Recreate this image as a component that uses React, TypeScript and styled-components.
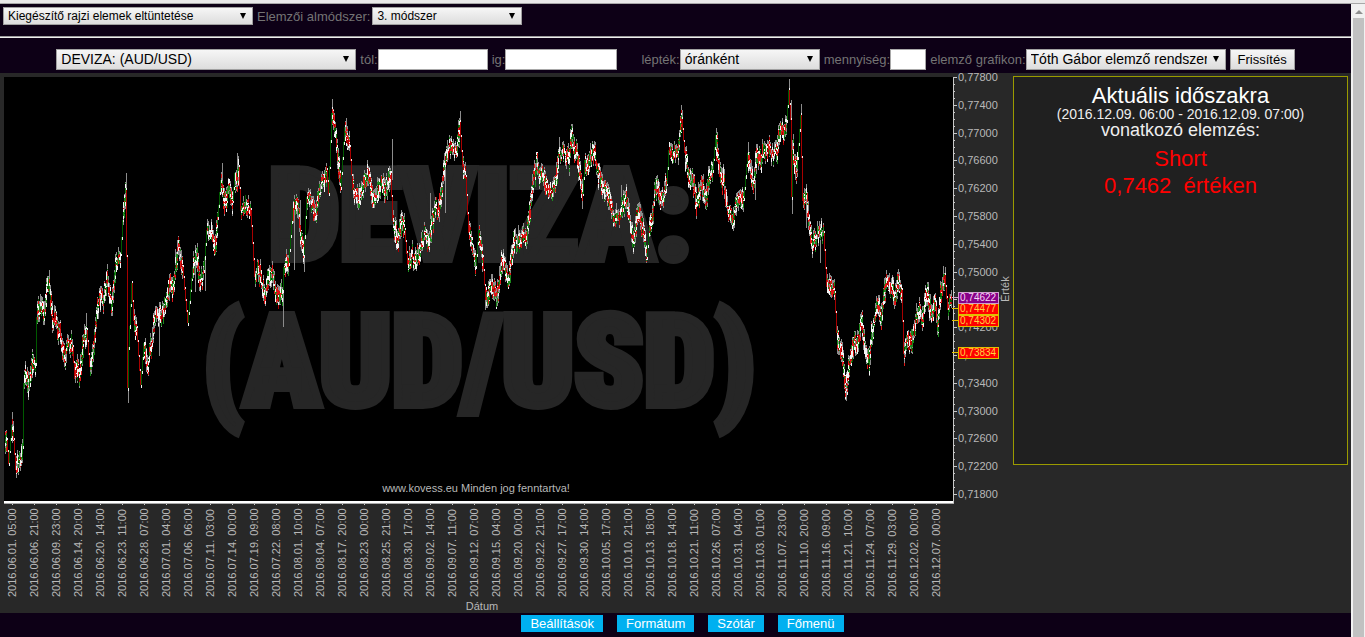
import React from "react";
import styled, { createGlobalStyle } from "styled-components";

const GlobalStyle = createGlobalStyle`
  * { box-sizing: border-box; }
  body {
    margin: 0;
    background: #0d0016;
    font-family: "Liberation Sans", Arial, sans-serif;
    font-size: 13px;
    color: #747474;
  }
`;

const Page = styled.div`
  display: flex;
  flex-direction: column;
  min-height: 100vh;
`;

const WindowEdge = styled.div`
  height: 4px;
  background: #e9e9e9;
  border-bottom: 1px solid #a8a8a8;
`;

const Body = styled.div`
  display: flex;
  flex: 1;
`;

const Content = styled.div`
  display: flex;
  flex-direction: column;
  flex: 1;
  min-width: 0;
`;

const ScrollTrack = styled.div`
  display: flex;
  flex-direction: column;
  align-items: center;
  width: 14px;
  padding: 6px 1px 0 2px;
  background: #f1f1f1;
`;

const ScrollThumb = styled.div`
  flex: 1;
  width: 100%;
  margin-top: 4px;
  background: #c1c1c1;
`;

const MethodBar = styled.form`
  display: flex;
  align-items: center;
  gap: 4px;
  height: 32px;
  padding: 0 3px 8px;
`;

const Divider = styled.hr`
  width: 100%;
  height: 2px;
  margin: 0;
  border: 0;
  border-top: 1px solid #9a9a9a;
  background: #eeeeee;
`;

const FilterBar = styled.form`
  display: flex;
  align-items: center;
  justify-content: center;
  gap: 4px;
  height: 35px;
  padding-top: 7px;
`;

const Field = styled.label`
  display: flex;
  align-items: center;
  white-space: nowrap;
`;

const MethodField = styled(Field)`
  gap: 2px;
`;

const WideField = styled(Field)`
  margin-left: 20px;
`;

const SelectBox = styled.span<{ $width: number }>`
  position: relative;
  display: block;
  width: ${(p) => p.$width}px;

  &::after {
    content: "";
    position: absolute;
    top: 50%;
    right: 7px;
    margin-top: -3px;
    border: 3px solid transparent;
    border-top: 6px solid #000;
    border-bottom: 0;
    pointer-events: none;
  }
`;

const Select = styled.select<{ $compact?: boolean }>`
  appearance: none;
  display: block;
  width: 100%;
  height: ${(p) => (p.$compact ? 18 : 21)}px;
  padding: 0 18px 0 4px;
  border: 1px solid #a0a0a0;
  border-radius: 0;
  background: linear-gradient(#f6f6f6, #dddddd);
  color: #000;
  font: ${(p) => (p.$compact ? 12 : 14)}px "Liberation Sans", Arial, sans-serif;
`;

const TextInput = styled.input<{ $width: number }>`
  width: ${(p) => p.$width}px;
  height: 21px;
  padding: 0 2px;
  border: 1px solid #a8a8a8;
  border-radius: 0;
  background: #fff;
  font: 13px "Liberation Sans", Arial, sans-serif;
`;

const RefreshButton = styled.button`
  height: 21px;
  padding: 0 7px;
  border: 1px solid #a0a0a0;
  border-radius: 0;
  background: linear-gradient(#f6f6f6, #dddddd);
  color: #000;
  font: 13px "Liberation Sans", Arial, sans-serif;
`;

const Workspace = styled.main`
  display: grid;
  grid-template-columns: minmax(0, 1013fr) minmax(0, 335fr);
  align-items: start;
  padding-right: 3px;
  background: #282828;
`;

const ChartFigure = styled.figure`
  margin: 0;

  svg {
    display: block;
    width: 100%;
    height: auto;
    overflow: visible;
  }
`;

const Panel = styled.section`
  display: flex;
  flex-direction: column;
  align-items: center;
  min-height: 389px;
  margin-top: 3px;
  padding-top: 7px;
  border: 1px solid #9a9a00;
  background: #202020;
  color: #fff;
  white-space: nowrap;
`;

const PanelTitle = styled.h1`
  margin: 0;
  font-size: 22px;
  font-weight: 400;
  line-height: 23px;
`;

const PanelPeriod = styled.p`
  margin: 0;
  font-size: 14px;
  line-height: 15px;
  color: #eee;
`;

const PanelSubtitle = styled.p`
  margin: 0 0 7px;
  font-size: 18px;
  line-height: 16px;
  color: #eee;
`;

const Signal = styled.strong`
  color: #f00;
  font-size: 22px;
  font-weight: 400;
  line-height: 27px;
  white-space: pre;
`;

const Footer = styled.nav`
  display: flex;
  justify-content: center;
  gap: 14px;
  padding: 2px 0 5px 14px;
`;

const FooterButton = styled.button`
  height: 17px;
  padding: 0 9px;
  border: 0;
  background: #00b0f0;
  color: #fff;
  font: 13px/17px "Liberation Sans", Arial, sans-serif;
`;

/* Course of the exchange rate, as x, y pairs in chart units. */
const COURSE = [
  5, 450, 7, 440, 9, 463, 12, 425, 14, 440, 16, 470, 20, 460, 23, 446, 24, 383, 26, 370, 29, 390, 33, 363, 36, 363,
  37, 317, 42, 303, 44, 312, 47, 290, 49, 282, 53, 317, 57, 323, 61, 337, 65, 360, 68, 342, 73, 347, 75, 378,
  77, 363, 80, 376, 83, 343, 87, 330, 90, 367, 94, 343, 97, 313, 100, 297, 103, 303, 107, 280, 112, 305, 116, 267,
  121, 253, 123, 220, 126, 190, 127, 257, 128, 388, 129, 347, 132, 283, 134, 320, 137, 328, 141, 385, 144, 343,
  148, 367, 152, 340, 156, 310, 160, 317, 165, 307, 170, 280, 173, 290, 178, 247, 183, 267, 188, 323, 193, 267,
  197, 257, 200, 285, 204, 270, 207, 230, 211, 230, 215, 248, 218, 217, 221, 180, 226, 203, 229, 183, 233, 200,
  235, 173, 237, 187, 239, 167, 241, 210, 247, 207, 251, 210, 255, 277, 258, 267, 265, 295, 271, 270, 275, 287,
  279, 300, 283, 290, 284, 267, 289, 263, 293, 207, 297, 200, 300, 227, 304, 255, 307, 197, 312, 203, 316, 215,
  319, 193, 324, 180, 327, 170, 329, 193, 332, 113, 336, 137, 341, 187, 345, 127, 350, 147, 353, 190, 359, 203,
  363, 183, 368, 173, 374, 200, 381, 183, 385, 193, 391, 173, 393, 220, 397, 243, 402, 220, 405, 230, 408, 265,
  412, 253, 415, 265, 421, 247, 425, 235, 429, 240, 432, 223, 436, 205, 439, 213, 443, 177, 447, 147, 452, 150,
  457, 152, 460, 122, 463, 167, 466, 177, 469, 233, 473, 250, 476, 266, 479, 230, 483, 257, 486, 300, 491, 283,
  497, 300, 502, 260, 505, 267, 509, 283, 512, 253, 515, 237, 518, 243, 523, 233, 527, 237, 530, 213, 533, 180,
  537, 163, 540, 177, 544, 177, 547, 187, 552, 193, 557, 173, 559, 153, 565, 153, 569, 160, 572, 137, 577, 153,
  583, 193, 585, 160, 588, 167, 593, 147, 598, 167, 603, 193, 607, 190, 613, 217, 620, 213, 626, 197, 630, 220,
  634, 243, 638, 213, 640, 217, 643, 227, 647, 257, 649, 233, 653, 210, 657, 180, 662, 203, 667, 183, 669, 150,
  673, 153, 678, 150, 682, 119, 685, 153, 690, 183, 693, 177, 697, 203, 702, 183, 706, 203, 709, 177, 713, 170,
  716, 135, 719, 167, 724, 183, 728, 210, 733, 218, 739, 197, 743, 198, 744, 198, 748, 153, 751, 167, 754, 183,
  757, 155, 761, 160, 767, 147, 772, 153, 777, 150, 781, 123, 784, 133, 787, 120, 789, 90, 791, 120, 792, 197,
  793, 150, 796, 177, 798, 157, 801, 115, 803, 200, 807, 197, 812, 245, 818, 233, 824, 233, 827, 287, 830, 283,
  835, 293, 837, 333, 842, 353, 846, 390, 849, 367, 855, 340, 858, 347, 862, 320, 865, 350, 869, 360, 872, 333,
  878, 305, 881, 320, 886, 283, 892, 287, 895, 303, 898, 283, 902, 290, 904, 353, 908, 337, 911, 347, 914, 327,
  919, 307, 923, 320, 927, 287, 931, 313, 935, 303, 938, 323, 942, 287, 945, 275, 948, 310, 952, 302,
];

/* Long shadows: x, top, bottom. */
const SHADOWS = [
  [12, 412, 425], [16, 460, 478], [49, 270, 284], [86, 313, 340], [107, 264, 284], [126, 173, 200], [128, 380, 403],
  [159, 320, 356], [195, 245, 292], [205, 255, 291], [222, 163, 180], [237, 153, 170], [283, 284, 327],
  [294, 195, 270], [300, 200, 225], [304, 245, 272], [332, 99, 120], [346, 118, 130], [392, 139, 180],
  [430, 193, 240], [445, 155, 213], [460, 111, 130], [485, 290, 310], [559, 137, 150], [572, 126, 145],
  [582, 190, 209], [621, 185, 205], [682, 110, 125], [716, 128, 140], [733, 215, 231], [748, 142, 160],
  [755, 180, 200], [789, 79, 95], [791, 100, 118], [792, 140, 214], [801, 104, 120], [806, 195, 228],
  [820, 232, 263], [846, 385, 401], [878, 295, 310], [904, 345, 359], [945, 267, 280], [948, 305, 320],
];

type Tone = "shadow" | "white" | "rise" | "fall" | "deepRise" | "deepFall";
const TONES: Record<Tone, string> = {
  shadow: "#8c8c8c",
  white: "#f4f4f4",
  rise: "#1c8a1c",
  fall: "#e01616",
  deepRise: "#005a00",
  deepFall: "#a80000",
};

function buildCandles() {
  const paths: Record<Tone, string> = { shadow: "", white: "", rise: "", fall: "", deepRise: "", deepFall: "" };
  let seed = 7;
  const rnd = () => {
    seed = (seed * 16807) % 2147483647;
    return seed / 2147483647;
  };
  const add = (tone: Tone, x: number, a: number, b: number) => {
    const top = Math.round(Math.min(a, b));
    const size = Math.max(1, Math.round(Math.abs(b - a)));
    paths[tone] += `M${x} ${top}v${size}`;
  };
  SHADOWS.forEach(([x, a, b]) => add("shadow", x + 0.5, a, b));
  for (let i = 0; i + 3 < COURSE.length; i += 2) {
    const [x0, y0, x1, y1] = COURSE.slice(i, i + 4);
    const slope = (y1 - y0) / (x1 - x0);
    const steep = Math.abs(slope) > 11;
    for (let x = x0; x < x1; x++) {
      const from = y0 + slope * (x - x0);
      const to = from + slope;
      const cx = x + 0.5;
      if (steep) {
        add(slope > 0 ? "deepFall" : "deepRise", cx, from, to);
        add("white", cx, from - 2, from + 3);
        if (rnd() > 0.5) add(slope > 0 ? "fall" : "rise", cx, (from + to) / 2, (from + to) / 2 + 6);
        continue;
      }
      const mid = (from + to) / 2 + (rnd() - 0.5) * 10;
      const half = Math.abs(slope) / 2 + 3 + rnd() * 5;
      add("shadow", cx, mid - half - rnd() * 5, mid + half + rnd() * 5);
      let y = mid - half;
      while (y < mid + half) {
        const step = 1 + Math.floor(rnd() * 4);
        const pick = rnd();
        const trend: Tone = rnd() < (slope > 0 ? 0.7 : 0.4) ? "fall" : "rise";
        if (pick < 0.32) add("white", cx, y, y + step);
        else if (pick < 0.72) add(trend, cx, y, y + step);
        else if (pick < 0.9) add(trend === "fall" ? "deepFall" : "deepRise", cx, y, y + step);
        y += step;
      }
    }
  }
  return paths;
}

const CANDLES = buildCandles();

const DATES = [
  "06.01. 05:00", "06.06. 21:00", "06.09. 23:00", "06.14. 20:00", "06.20. 14:00", "06.23. 11:00", "06.28. 07:00",
  "07.01. 04:00", "07.06. 06:00", "07.11. 03:00", "07.14. 00:00", "07.19. 09:00", "07.22. 08:00", "08.01. 10:00",
  "08.04. 07:00", "08.17. 20:00", "08.23. 00:00", "08.25. 21:00", "08.30. 17:00", "09.02. 14:00", "09.07. 11:00",
  "09.12. 07:00", "09.15. 04:00", "09.20. 00:00", "09.22. 21:00", "09.27. 17:00", "09.30. 14:00", "10.05. 17:00",
  "10.10. 21:00", "10.13. 18:00", "10.18. 14:00", "10.21. 11:00", "10.26. 07:00", "10.31. 04:00", "11.03. 01:00",
  "11.07. 23:00", "11.10. 20:00", "11.16. 09:00", "11.21. 10:00", "11.24. 07:00", "11.29. 03:00", "12.02. 00:00",
  "12.07. 00:00",
];

const PRICE_STEPS = Array.from({ length: 16 }, (_, i) => ({
  label: "0," + (77800 - i * 400),
  y: Math.round(77 + i * 27.8),
}));
const MINOR_TICKS = Array.from({ length: 61 }, (_, i) => Math.round(77 + i * 6.95));

const TAGS = [
  { label: "0,73834", y: 347, fill: "#ff0000", line: "#e0c000", text: "#ffd040" },
  { label: "0,74302", y: 315, fill: "#ff0000", line: "#e0c000", text: "#ffd040" },
  { label: "0,74477", y: 303, fill: "#ff0000", line: "#e0c000", text: "#ffd040" },
  { label: "0,74622", y: 292, fill: "#880088", line: "#d0a0d0", text: "#f4d8f4" },
];

const AxisText = styled.text`
  font: 11px "Liberation Sans", Arial, sans-serif;
  fill: #b8b8b8;
`;

const TagText = styled.text<{ $color: string }>`
  font: 10px "Liberation Sans", Arial, sans-serif;
  fill: ${(p) => p.$color};
`;

const Watermark = styled.text`
  font: 900 126px Impact, "Roboto Condensed", Roboto, sans-serif;
  fill: #262626;
  stroke: #262626;
  stroke-width: 8px;
  text-anchor: middle;
`;

function RateChart() {
  return (
    <svg viewBox="0 73 1013 540" role="img" aria-label="DEVIZA: (AUD/USD)">
      <rect x="4" y="77" width="949" height="424" fill="#000" />
      <Watermark x="480" y="259">DEVIZA:</Watermark>
      <Watermark x="479" y="405">(AUD/USD)</Watermark>
      <g fill="none" shapeRendering="crispEdges">
        {(Object.keys(TONES) as Tone[]).map((tone) => (
          <path key={tone} d={CANDLES[tone]} stroke={TONES[tone]} />
        ))}
      </g>
      <AxisText x="476" y="492" textAnchor="middle">www.kovess.eu Minden jog fenntartva!</AxisText>

      <g shapeRendering="crispEdges">
        <rect x="4" y="501" width="950" height="2" fill="#fff" />
        <rect x="4" y="503" width="950" height="1" fill="#aaa" />
        <rect x="953" y="77" width="1" height="426" fill="#c8c8c8" />
        {MINOR_TICKS.map((y) => (
          <rect key={y} x="954" y={y} width="1" height="1" fill="#c8c8c8" />
        ))}
        {PRICE_STEPS.map(({ y }) => (
          <rect key={y} x="954" y={y} width="3" height="1" fill="#c8c8c8" />
        ))}
        {DATES.map((date, i) => (
          <rect key={date} x={12 + i * 22} y="504" width="1" height="1" fill="#c8c8c8" />
        ))}
      </g>
      {PRICE_STEPS.map(({ label, y }) => (
        <AxisText key={label} x="958" y={y + 4}>{label}</AxisText>
      ))}
      {TAGS.map((tag) => (
        <g key={tag.label} shapeRendering="crispEdges">
          <rect x="952" y={tag.y + 5} width="6" height="1" fill={tag.line} />
          <rect x="958" y={tag.y} width="41" height="12" fill={tag.line} />
          <rect x="959" y={tag.y + 1} width="39" height="10" fill={tag.fill} />
          <TagText x="960" y={tag.y + 9} $color={tag.text}>{tag.label}</TagText>
        </g>
      ))}
      <AxisText transform="translate(1009 302) rotate(-90)">Érték</AxisText>
      {DATES.map((date, i) => (
        <AxisText key={date} transform={`translate(${16 + i * 22} 597) rotate(-90)`}>{"2016." + date}</AxisText>
      ))}
      <AxisText x="482" y="610" textAnchor="middle">Dátum</AxisText>
    </svg>
  );
}

function Dropdown({ width, value, label, compact }: { width: number; value: string; label?: string; compact?: boolean }) {
  return (
    <SelectBox $width={width}>
      <Select $compact={compact} aria-label={label} defaultValue={value}>
        <option>{value}</option>
      </Select>
    </SelectBox>
  );
}

export default function App() {
  return (
    <Page>
      <GlobalStyle />
      <WindowEdge />
      <Body>
        <Content>
          <MethodBar>
            <Dropdown compact width={250} value="Kiegészítő rajzi elemek eltüntetése" label="Rajzi elemek" />
            <MethodField>
              Elemzői almódszer:
              <Dropdown compact width={150} value="3. módszer" />
            </MethodField>
          </MethodBar>
          <Divider />
          <FilterBar>
            <Dropdown width={300} value="DEVIZA: (AUD/USD)" label="Instrumentum" />
            <Field>
              tól:
              <TextInput type="text" $width={110} />
            </Field>
            <Field>
              ig:
              <TextInput type="text" $width={112} />
            </Field>
            <WideField>
              lépték:
              <Dropdown width={140} value="óránként" />
            </WideField>
            <Field>
              mennyiség:
              <TextInput type="text" $width={36} />
            </Field>
            <Field>
              elemző grafikon:
              <Dropdown width={200} value="Tóth Gábor elemző rendszere" />
            </Field>
            <RefreshButton type="button">Frissítés</RefreshButton>
          </FilterBar>
          <Workspace>
            <ChartFigure>
              <RateChart />
            </ChartFigure>
            <Panel>
              <PanelTitle>Aktuális időszakra</PanelTitle>
              <PanelPeriod>(2016.12.09. 06:00 - 2016.12.09. 07:00)</PanelPeriod>
              <PanelSubtitle>vonatkozó elemzés:</PanelSubtitle>
              <Signal>Short</Signal>
              <Signal>{"0,7462  értéken"}</Signal>
            </Panel>
          </Workspace>
          <Footer>
            <FooterButton type="button">Beállítások</FooterButton>
            <FooterButton type="button">Formátum</FooterButton>
            <FooterButton type="button">Szótár</FooterButton>
            <FooterButton type="button">Főmenü</FooterButton>
          </Footer>
        </Content>
        <ScrollTrack aria-hidden="true">
          <svg width="8" height="4" viewBox="0 0 8 4">
            <path d="M4 0L8 4H0Z" fill="#8f8f8f" />
          </svg>
          <ScrollThumb />
        </ScrollTrack>
      </Body>
    </Page>
  );
}
